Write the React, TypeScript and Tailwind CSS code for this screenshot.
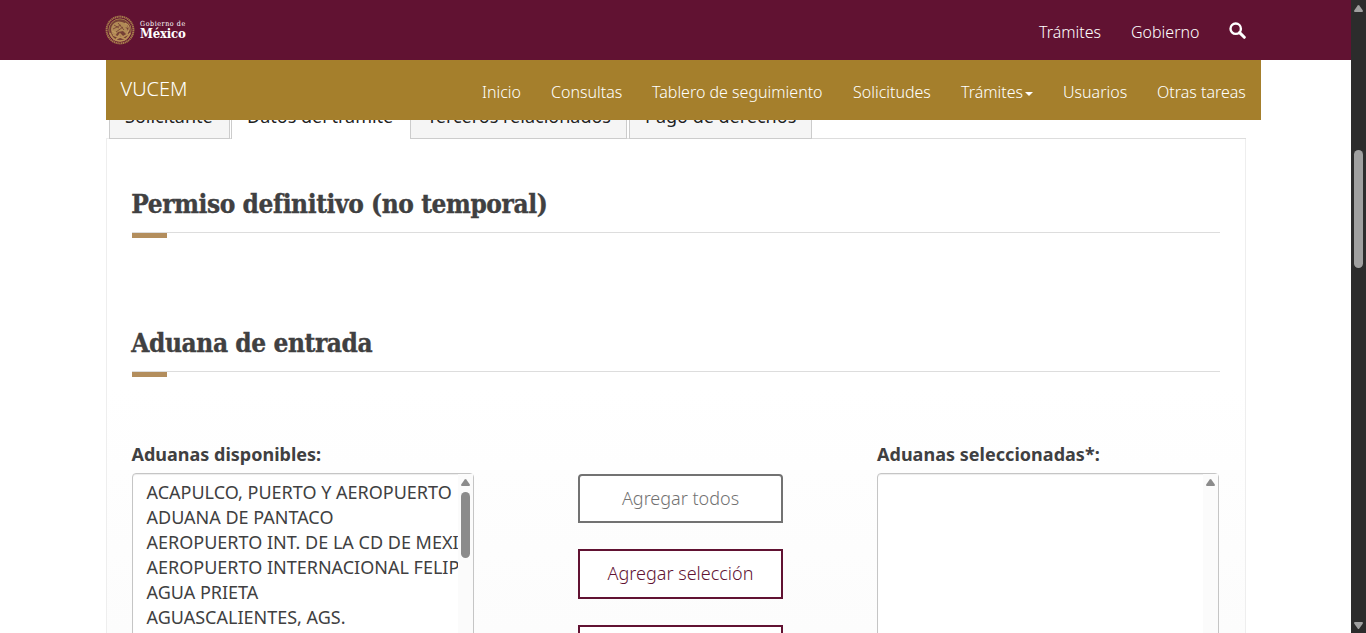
import React from "react";

const navItems = [
  { label: "Inicio", width: "w-[39px]" },
  { label: "Consultas", width: "w-[71px]" },
  { label: "Tablero de seguimiento", width: "w-[171px]" },
  { label: "Solicitudes", width: "w-[78px]" },
  { label: "Trámites", width: "w-[72px]", caret: true },
  { label: "Usuarios", width: "w-[64px]" },
  { label: "Otras tareas", width: "w-[89px]" },
];

const customs = [
  "ACAPULCO, PUERTO Y AEROPUERTO",
  "ADUANA DE PANTACO",
  "AEROPUERTO INT. DE LA CD DE MEXICO",
  "AEROPUERTO INTERNACIONAL FELIPE",
  "AGUA PRIETA",
  "AGUASCALIENTES, AGS.",
];

function Seal() {
  return (
    <svg className="h-[30px] w-[30px] shrink-0" viewBox="0 0 30 30" fill="none">
      <circle cx="15" cy="15" r="13.4" stroke="#a67b4b" strokeWidth="2" strokeDasharray="1.4 .45" />
      <circle cx="15" cy="15" r="11.2" fill="#754035" stroke="#ae8551" strokeWidth=".8" />
      <path d="M6 15c0-6 5-10 11-8 4 1 6 3 6 6l-3-1c3 2 4 5 2 8l-4-4-5 1-3 4-3-2z" fill="#b18a56" />
      <path d="M9 10l5 3M8 14l8-4M13 8l6 7M11 17l7-5" stroke="#713b31" strokeWidth=".8" />
      <path d="M5 18c2 6 6 8 10 8s8-3 10-8M8 20l5 2 2-3 3 3 5-3M11 24l4-2 5 2" stroke="#b98f58" strokeWidth="1.7" />
      <path d="M23 10c2 3 1 6-1 8M7 16l4 2M20 8l3 2" stroke="#c19860" strokeWidth="1.2" />
    </svg>
  );
}

function UpArrow({ className }: { className: string }) {
  return (
    <svg className={className} viewBox="0 0 9 7" fill="currentColor">
      <path d="M3.7.6Q4.5-.4 5.3.6L8.7 5.3Q9.4 6.8 8 7H1Q-.4 6.8.3 5.3Z" />
    </svg>
  );
}

function SectionTitle({ children }: { children: string }) {
  return (
    <div className="h-[54px]">
      <h2 className="h-[47px] whitespace-nowrap border-b border-[#ddd] font-['DejaVu_Serif'] text-[26px] font-bold leading-[36px] tracking-[-.42px] text-[#404041] [font-stretch:condensed] [-webkit-text-stroke:0.35px_#404041]">
        <span className="-ml-[.7px]">{children}</span>
      </h2>
      <div className="h-[5px] w-[35px] bg-[#b38e5d]" />
    </div>
  );
}

function ListBox({ items }: { items: string[] }) {
  return (
    <div className="flex h-[240px] w-[342px] rounded-[4px] border border-[#c5c5c5] bg-white shadow-[inset_0_1px_1px_rgba(0,0,0,0.075)]">
      <div className="min-w-0 flex-1 overflow-hidden pl-[13.5px] pt-[6px]">
        {items.map((item) => (
          <div key={item} className="h-[25px] whitespace-nowrap text-[18px] leading-[25px]">{item}</div>
        ))}
      </div>
      <div className="flex w-[15px] flex-col items-center bg-[#fbfbfb] pt-[5px]">
        <UpArrow className="h-[7px] w-[9px] text-[#8b8b8b]" />
        {items.length > 0 && <div className="mt-[6px] h-[66px] w-[9px] rounded-full bg-[#8b8b8b]" />}
      </div>
    </div>
  );
}

export default function App() {
  return (
    <div className="flex h-[633px] w-[1366px] overflow-hidden bg-white font-['Noto_Sans',sans-serif] text-[#404041]">
      <div className="flex w-[1351px] flex-col">
        <header className="flex h-[60px] shrink-0 items-center bg-[#611232] pl-[105px] text-white">
          <Seal />
          <div className="ml-[5px] flex w-[50px] flex-col font-['DejaVu_Serif'] [font-stretch:condensed]">
            <span className="mt-[1px] h-[7px] whitespace-nowrap text-[7px] leading-[7px] tracking-[.6px]">Gobierno de</span>
            <span className="h-[13px] whitespace-nowrap text-[13px] font-bold leading-[12px] tracking-[-.2px]">México</span>
          </div>
          <nav className="ml-auto flex items-center pr-[105px] text-[16px] font-light leading-[24px]">
            <a className="mr-[30px] mt-[4px] w-[62px] whitespace-nowrap">Trámites</a>
            <a className="mr-[30px] mt-[4px] w-[68px] whitespace-nowrap">Gobierno</a>
            <svg className="h-[17px] w-[17px]" viewBox="0 0 17 17" fill="none" stroke="white">
              <circle cx="6.7" cy="6.7" r="5.2" strokeWidth="2.4" />
              <path d="M10.6 10.6l4.7 4.7" strokeWidth="3" strokeLinecap="round" />
            </svg>
          </nav>
        </header>
        <div className="ml-[106px] flex h-[60px] w-[1155px] shrink-0 justify-between bg-[#a57f2c] pl-[14.5px] pr-[15px] text-white">
          <span className="mt-[14px] text-[20px] font-light leading-[30px]">VUCEM</span>
          <nav className="flex items-start gap-[30px] pt-[20px] text-[16px] font-light leading-[24px]">
            {navItems.map((item) => (
              <a key={item.label} className={`flex items-center whitespace-nowrap ${item.width}`}>
                {item.label}
                {item.caret && <span className="ml-[2px] mt-[4px] border-x-4 border-t-4 border-x-transparent border-t-white" />}
              </a>
            ))}
          </nav>
        </div>
        <main className="ml-[106px] w-[1140px]">
          <div className="flex h-[19px] overflow-hidden text-[18px] text-[#222]">
            <div className="w-[3px] border-b border-[#eee]" />
            <div className="h-[19px] w-[121px] border-x border-b border-[#ccc] bg-[#f5f5f5] pl-[15px]"><span className="-mt-[17px] block whitespace-nowrap leading-[26px]">Solicitante</span></div>
            <div className="w-[1px] border-b border-[#ddd]" />
            <div className="h-[19px] w-[180px] border-x border-[#ccc] bg-white pl-[15px]"><span className="-mt-[17px] block whitespace-nowrap leading-[26px]">Datos del trámite</span></div>
            <div className="h-[19px] w-[216px] border-b border-r border-[#ccc] bg-[#f5f5f5] pl-[16px]"><span className="-mt-[17px] block whitespace-nowrap leading-[26px]">Terceros relacionados</span></div>
            <div className="w-[2px] border-b border-[#ddd]" />
            <div className="h-[19px] w-[183px] border-x border-b border-[#ccc] bg-[#f5f5f5] pl-[15px]"><span className="-mt-[17px] block whitespace-nowrap leading-[26px]">Pago de derechos</span></div>
            <div className="flex-1 border-b border-[#ddd]" />
          </div>
          <section className="h-[494px] border-x border-[#eee] bg-gradient-to-b from-white from-50% to-[#fcfcfc] pl-[25px] pr-[25px] pt-[47px]">
            <SectionTitle>Permiso definitivo (no temporal)</SectionTitle>
            <div className="mt-[85px]"><SectionTitle>Aduana de entrada</SectionTitle></div>
            <div className="mt-[63px] flex">
              <div className="w-[342px]">
                <label className="-ml-[.5px] block h-[31px] whitespace-nowrap text-[18px] font-bold leading-[25px]">Aduanas disponibles:</label>
                <ListBox items={customs} />
              </div>
              <div className="ml-[104px] flex w-[205px] flex-col pt-[32px] text-[18px] font-light">
                <button className="h-[49px] rounded-t-[4px] border-2 border-[#727272] bg-white text-[#727272]">Agregar todos</button>
                <button className="mt-[26px] h-[50px] border-2 border-[#611232] bg-white pb-[1px] text-[#611232]">Agregar selección</button>
                <button className="mt-[26px] h-[50px] border-2 border-[#611232] bg-white" />
              </div>
              <div className="ml-[94px] w-[342px]">
                <label className="block h-[31px] whitespace-nowrap text-[18px] font-bold leading-[25px] tracking-[.03px]">Aduanas seleccionadas*:</label>
                <ListBox items={[]} />
              </div>
            </div>
          </section>
        </main>
      </div>
      <aside className="flex w-[15px] flex-col items-center bg-[#2c2c2c] pt-[5px] text-[#a0a0a0]">
        <UpArrow className="h-[7px] w-[9px]" />
        <div className="mt-[138px] h-[118px] w-[9px] rounded-full bg-[#a0a0a0]" />
        <UpArrow className="mb-[4px] mt-auto h-[7px] w-[9px] rotate-180" />
      </aside>
    </div>
  );
}
